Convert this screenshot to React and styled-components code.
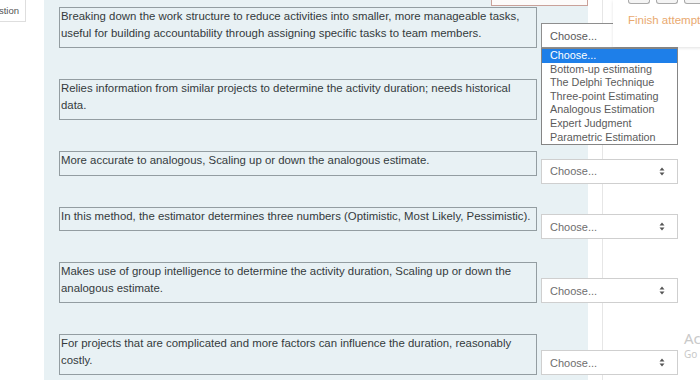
import React from 'react'
import styled, { createGlobalStyle } from 'styled-components'

const GlobalStyle = createGlobalStyle`
    html, body {
        margin: 0;
        padding: 0;
        background: #fff;
        overflow: hidden;
    }
    body {
        font-family: "Liberation Sans", Arial, sans-serif;
    }
`

// each answer is kept as its visual lines, the way the quiz wraps them
const rows = [
    {
        lines: [
            'Breaking down the work structure to reduce activities into smaller, more manageable tasks,',
            'useful for building accountability through assigning specific tasks to team members.',
        ],
        open: true,
    },
    {
        lines: [
            'Relies information from similar projects to determine the activity duration; needs historical',
            'data.',
        ],
    },
    {
        lines: ['More accurate to analogous, Scaling up or down the analogous estimate.'],
        low: true,
    },
    {
        lines: ['In this method, the estimator determines three numbers (Optimistic, Most Likely, Pessimistic).'],
        low: true,
    },
    {
        lines: [
            'Makes use of group intelligence to determine the activity duration, Scaling up or down the',
            'analogous estimate.',
        ],
    },
    {
        lines: [
            'For projects that are complicated and more factors can influence the duration, reasonably',
            'costly.',
        ],
    },
]

const options = [
    'Choose...',
    'Bottom-up estimating',
    'The Delphi Technique',
    'Three-point Estimating',
    'Analogous Estimation',
    'Expert Judgment',
    'Parametric Estimation',
]

const Arrows = () => (
    <svg width="6" height="9" viewBox="0 0 6 9">
        <path d="M3 0.5 L5.5 3.5 L0.5 3.5 Z" fill="#555" />
        <path d="M3 8.5 L5.5 5.5 L0.5 5.5 Z" fill="#555" />
    </svg>
)

const App = () => {
    return (
        <>
            <GlobalStyle />
            <Page>
                <Rail>
                    <QuestionTab>
                        <span>Question</span>
                    </QuestionTab>
                </Rail>

                <Main>
                    <FlagTab />
                    <Rows>
                        {rows.map((row, i) => (
                            <Row key={i}>
                                <Answer>
                                    {row.lines.map(line => (
                                        <Line key={line}>{line}</Line>
                                    ))}
                                </Answer>
                                <SelectWrap $low={row.low}>
                                    <SelectBox $open={row.open}>
                                        <span>Choose...</span>
                                        {!row.open && <Arrows />}
                                    </SelectBox>
                                    {row.open && (
                                        <Dropdown>
                                            {options.map((opt, j) => (
                                                <Option key={opt} $active={j === 0}>{opt}</Option>
                                            ))}
                                        </Dropdown>
                                    )}
                                </SelectWrap>
                            </Row>
                        ))}
                    </Rows>
                </Main>

                <Drawer>
                    <FinishCard>
                        <NavButtons>
                            <NavButton />
                            <NavButton />
                            <NavButton />
                        </NavButtons>
                        <FinishLink>Finish attempt</FinishLink>
                    </FinishCard>
                </Drawer>

                <Watermark>
                    <div className="big">Ac</div>
                    <div className="small">Go</div>
                </Watermark>
            </Page>
        </>
    )
}

const Page = styled.div`
    position: relative;
    display: flex;
    width: 700px;
    height: 380px;
    overflow: hidden;
    background: #fff;
`

const Rail = styled.div`
    flex: none;
    width: 44px;
`

const QuestionTab = styled.div`
    display: flex;
    justify-content: flex-end;
    align-items: center;
    width: 26px;
    height: 22px;
    box-sizing: border-box;
    padding-right: 6px;
    overflow: hidden;
    border: 1px solid #dedede;
    border-left: none;
    border-top: none;
    background: #fff;
    font-size: 9.5px;
    color: #555;
    white-space: nowrap;
`

const Main = styled.div`
    flex: none;
    width: 544px;
    box-sizing: border-box;
    padding-left: 15px;
    background: #e8f1f4;
`

const FlagTab = styled.div`
    width: 95px;
    height: 5px;
    margin: 0 0 1px 432px;
    background: #fdfbfa;
    border: 1px solid #c9a199;
    border-top: none;
`

const Rows = styled.div`
    display: flex;
    flex-direction: column;
    gap: 31px;
`

const Row = styled.div`
    display: flex;
    align-items: flex-end;
    gap: 4px;
`

const Answer = styled.div`
    flex: none;
    width: 478px;
    box-sizing: border-box;
    padding: 0 0 6px 1px;
    border: 1px solid #939da1;
    font-size: 11.4px;
    line-height: 16.5px;
    color: #343a3c;
`

const Line = styled.div`
    white-space: nowrap;
`

const SelectWrap = styled.div`
    position: relative;
    flex: none;
    width: 137px;
    margin-bottom: ${p => (p.$low ? '-8px' : '0')};
`

const SelectBox = styled.div`
    position: relative;
    z-index: 2;
    display: flex;
    align-items: center;
    justify-content: space-between;
    height: 25px;
    box-sizing: border-box;
    padding: 0 12px 0 8px;
    background: #fff;
    border: 1px solid ${p => (p.$open ? '#8e8e8e' : '#cfcfcf')};
    font-size: 11px;
    color: ${p => (p.$open ? '#5a5a5a' : '#6e6e6e')};
`

const Dropdown = styled.div`
    position: absolute;
    z-index: 5;
    top: 100%;
    left: 0;
    width: 137px;
    box-sizing: border-box;
    background: #fff;
    border: 1px solid #858585;
`

const Option = styled.div`
    height: 13.6px;
    padding-left: 8px;
    font-size: 10.8px;
    line-height: 13.6px;
    white-space: nowrap;
    background: ${p => (p.$active ? '#1e7fe9' : 'transparent')};
    color: ${p => (p.$active ? '#fff' : '#5b5b5b')};
`

const Drawer = styled.div`
    flex: 1;
    margin-left: 14px;
    border-left: 1px solid #e6e6e6;
`

const FinishCard = styled.div`
    position: relative;
    z-index: 3;
    margin-left: 10px;
    height: 47px;
    box-sizing: border-box;
    padding-left: 15px;
    background: #fff;
    box-shadow: 0 1px 3px rgba(0, 0, 0, 0.12);
`

const NavButtons = styled.div`
    display: flex;
    gap: 6px;
`

const NavButton = styled.div`
    width: 20px;
    height: 3px;
    border: 1px solid #a9a9a9;
    border-top: none;
    border-radius: 0 0 3px 3px;
    background: #f4f4f4;
`

const FinishLink = styled.div`
    margin-top: 8px;
    font-size: 11.5px;
    line-height: 16px;
    color: #e9a96f;
    white-space: nowrap;
`

const Watermark = styled.div`
    position: absolute;
    left: 684px;
    top: 331px;
    color: #c9c9c9;
    font-family: "Noto Sans", "Liberation Sans", sans-serif;
    line-height: 1;

    .big {
        font-size: 15px;
    }

    .small {
        margin-top: 3px;
        font-size: 10px;
    }
`

export default App
